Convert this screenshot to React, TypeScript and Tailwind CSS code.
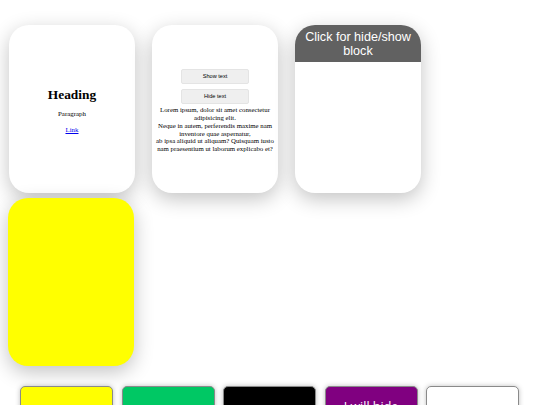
export default function App() {
  const lorem = (
    <>
      Lorem ipsum, dolor sit amet consectetur adipisicing elit.
      <br />
      Neque in autem, perferendis maxime nam inventore quae aspernatur,
      <br />
      ab ipsa aliquid ut aliquam? Quisquam iusto nam praesentium ut laborum explicabo et?
    </>
  );
  const card =
    "w-[126px] h-[168px] rounded-[20px] shadow-[0_6px_20px_rgba(0,0,0,0.24)] overflow-hidden";
  return (
    <div className="w-[540px] h-[405px] overflow-hidden bg-white">
      <div className="flex flex-wrap gap-x-[17px] gap-y-[5px] pl-[9px] pt-[25px] w-[540px]">
        <div
          className={`${card} bg-white flex flex-col items-center justify-center text-center text-black`}
          style={{ fontFamily: '"Liberation Serif", serif' }}
        >
          <h1 className="text-[13.4px] font-bold leading-[16px] mt-[3px]">Heading</h1>
          <p className="text-[6.9px] leading-[8px] mt-[7px]">Paragraph</p>
          <a href="#" className="text-[6.9px] leading-[8px] mt-[8px] text-[#0000ee] underline">
            Link
          </a>
        </div>
        <div className={`${card} bg-white flex flex-col items-center justify-center text-center pt-[4px]`}>
          <button
            className="w-[68px] h-[15px] rounded-[2px] bg-[#efefef] border border-[#e4e4e4] text-[5.6px] text-black"
            style={{ fontFamily: '"Liberation Sans", Arial, sans-serif' }}
          >
            Show text
          </button>
          <button
            className="w-[68px] h-[15px] rounded-[2px] bg-[#efefef] border border-[#e4e4e4] text-[5.6px] text-black mt-[5px]"
            style={{ fontFamily: '"Liberation Sans", Arial, sans-serif' }}
          >
            Hide text
          </button>
          <p
            className="text-[6.8px] leading-[7.9px] text-black mt-[2px] px-[1px]"
            style={{ fontFamily: '"Liberation Serif", serif' }}
          >
            {lorem}
          </p>
        </div>
        <div className={`${card} bg-white flex flex-col`}>
          <div
            className="h-[37px] bg-[#616161] text-white text-center text-[12.6px] leading-[14px] pt-[5px] px-[4px]"
            style={{ fontFamily: '"Liberation Sans", Arial, sans-serif' }}
          >
            Click for hide/show block
          </div>
        </div>
        <div className={`${card} bg-[#ffff00] ml-[-1px]`}></div>
      </div>
      <div className="flex gap-[8.5px] pl-[20px] mt-[20px]">
        <div className="w-[93px] h-[94px] rounded-[5px] border border-[#8a8a8a] bg-[#ffff00] shadow-[0_0_5px_rgba(0,0,0,0.25)]"></div>
        <div className="w-[93px] h-[94px] rounded-[5px] border border-[#8a8a8a] bg-[#00c864] shadow-[0_0_5px_rgba(0,0,0,0.25)]"></div>
        <div className="w-[93px] h-[94px] rounded-[5px] border border-[#8a8a8a] bg-black shadow-[0_0_5px_rgba(0,0,0,0.25)]"></div>
        <div
          className="w-[93px] h-[94px] rounded-[5px] border border-[#8a8a8a] bg-[#800080] shadow-[0_0_5px_rgba(0,0,0,0.25)] text-white text-center text-[12.5px] leading-[17px] pt-[11px]"
          style={{ fontFamily: '"Open Sans", sans-serif' }}
        >
          I will hide
        </div>
        <div className="w-[93px] h-[94px] rounded-[5px] border border-[#8a8a8a] bg-white shadow-[0_0_5px_rgba(0,0,0,0.25)]"></div>
      </div>
    </div>
  );
}
